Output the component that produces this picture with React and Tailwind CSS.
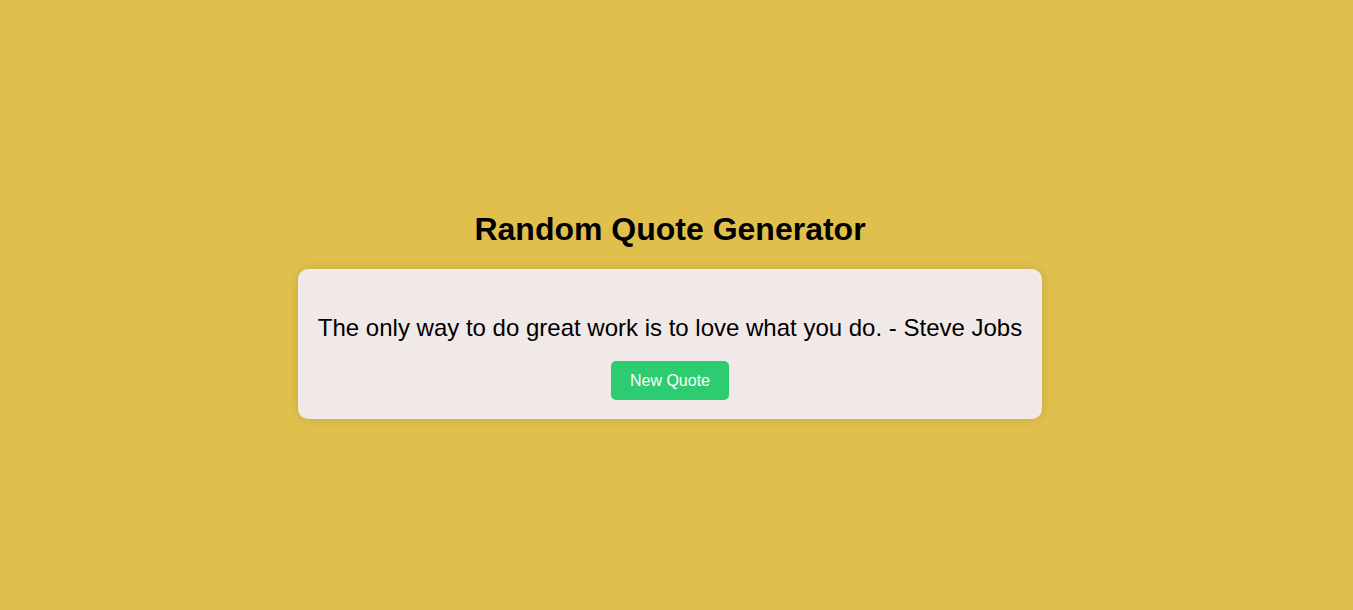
export default function App() {
  return (
    <div
      className="min-h-screen w-full bg-[#e0bf4c] flex flex-col items-center justify-center pb-[2px] pr-[13px]"
      style={{ fontFamily: '"Liberation Sans", Arial, sans-serif' }}
    >
      <h1 className="text-[32px] leading-[36.8px] font-bold text-black my-[21.44px]">
        Random Quote Generator
      </h1>
      <div className="w-[744px] bg-[#f1e8e8] rounded-[10px] shadow-[0_0_10px_rgba(0,0,0,0.12)] px-[20px] pt-[20px] pb-[19px] flex flex-col items-center">
        <p className="text-[24px] leading-[27.6px] text-black mt-[25px] mb-[19px] text-center whitespace-nowrap">
          The only way to do great work is to love what you do. - Steve Jobs
        </p>
        <button className="bg-[#2ecc71] text-white text-[16px] leading-[19px] px-[19px] py-[10px] rounded-[5px]">
          New Quote
        </button>
      </div>
    </div>
  );
}
